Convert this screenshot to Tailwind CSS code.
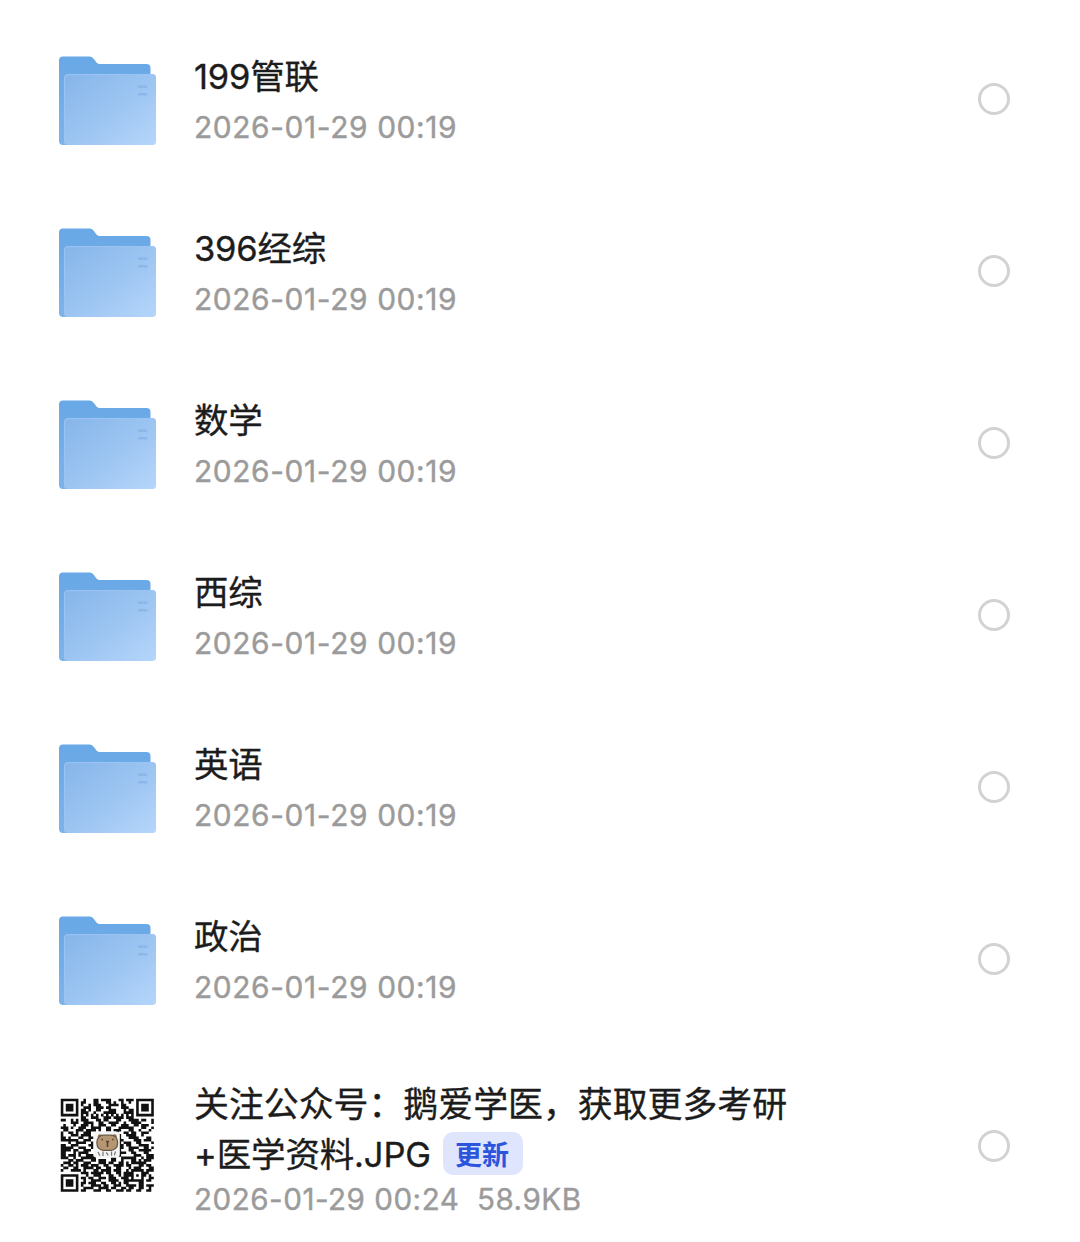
<!DOCTYPE html>
<html lang="zh-CN">

<head>
    <meta charset="UTF-8">
    <meta name="viewport" content="width=device-width, initial-scale=1.0">
    <title>文件列表</title>
    <script src="https://cdn.jsdelivr.net/npm/@tailwindcss/browser@4"></script>
</head>

<body class="bg-white overflow-hidden font-['Inter','Noto_Sans_CJK_SC',sans-serif]">
    <svg class="absolute w-0 h-0">
        <defs>
            <linearGradient id="front" x1="0" y1="0" x2="1" y2="1">
                <stop offset="0" stop-color="#86b5ea" />
                <stop offset="0.5" stop-color="#9bc4f1" />
                <stop offset="1" stop-color="#b6d6fb" />
            </linearGradient>
            <linearGradient id="back" x1="0" y1="0" x2="0" y2="1">
                <stop offset="0" stop-color="#68a8e6" />
                <stop offset="1" stop-color="#7db3ea" />
            </linearGradient>
        </defs>
    </svg>

    <main class="pt-3.5">
        <div id="folders"></div>

        <div class="flex items-center h-[200px] pl-[59px] pr-[70px]">
            <svg id="qr" class="w-[97px] h-[97px] shrink-0 -mt-px" viewBox="-0.7 -0.7 38.6 38.6"></svg>
            <div class="ml-[38px] flex-1 pt-1">
                <p class="text-[34.9px] leading-[52px] text-[#1c1c1c] whitespace-nowrap [-webkit-text-stroke:0.35px_#1c1c1c]">关注公众号：鹅爱学医，获取更多考研</p>
                <div class="flex items-center h-[50px]">
                    <p class="text-[34.5px] leading-[50px] tracking-[-0.15px] text-[#1c1c1c] whitespace-nowrap [-webkit-text-stroke:0.35px_#1c1c1c]">+医学资料.JPG</p>
                    <span class="ml-3 mb-1 w-20 h-[43px] pr-0.5 rounded-[10px] bg-[#dfe5fc] text-[#2d55dc] text-[27px] leading-[47px] font-bold text-center">更新</span>
                </div>
                <p class="text-[29.6px] leading-[38px] tracking-[0.5px] text-[#9b9b9b] whitespace-pre [-webkit-text-stroke:0.4px_#9b9b9b]">2026-01-29 00:24  58.9KB</p>
            </div>
            <span class="size-8 rounded-full border-3 border-[#d2d2d2]"></span>
        </div>
    </main>

    <script>
        const folders = ['199管联', '396经综', '数学', '西综', '英语', '政治'];

        const folderTemplate = (name, date) => `
        <div class="flex items-center h-[172px] pl-[59px] pr-[70px]">
            <svg class="w-[97px] h-[89px] shrink-0" viewBox="0 0 97 89">
                <path fill="url(#back)" d="M4 0.5H30.5Q33 0.5 34.5 2.5L37.5 6.5Q38.7 8 41 8H87.5Q91.5 8 91.5 12V30L20 89H4Q0 89 0 85V4.5Q0 0.5 4 0.5Z" />
                <rect x="5" y="18" width="92" height="71" rx="3.5" fill="url(#front)" />
                <path d="M5.6 86V22Q5.6 18.6 9 18.6H93Q96.4 18.6 96.4 22" fill="none" stroke="#9cc5f3" />
                <path d="M79.5 29.5H89L88 32H78.5ZM79.5 37H89L88 39.5H78.5Z" fill="#84b3e8" opacity="0.75" />
            </svg>
            <div class="ml-[38px] flex-1 pt-1">
                <p class="text-[34.5px] leading-[50px] tracking-[-0.2px] text-[#1c1c1c] [-webkit-text-stroke:0.35px_#1c1c1c]">${name}</p>
                <p class="text-[29.9px] leading-[50px] tracking-[0.6px] text-[#9b9b9b] [-webkit-text-stroke:0.4px_#9b9b9b]">${date}</p>
            </div>
            <span class="size-8 mb-0.5 rounded-full border-3 border-[#d2d2d2]"></span>
        </div>`

        document.getElementById('folders').innerHTML = folders.map(name => folderTemplate(name, '2026-01-29 00:19')).join('');

        // 37 x 37 modules
        const modules = [
            '#######..#...##.####...##.###.#######',
            '#.....#.##...##...##.#..#..#..#.....#',
            '#.###.#.#..#.###...####.##....#.###.#',
            '#.###.#..###..###.##....###...#.###.#',
            '#.###.#.##.#..##...###...#.##.#.###.#',
            '#.....#.###..#...#####...####.#.....#',
            '#######.#.#.#.#.#.#.#.#.#.#.#.#######',
            '........##..###..###.####.###........',
            '##..#.#.###...##.##...##...####.##..#',
            '....###..####..##..####..#..####....#',
            '.#...#..###.#..###..##..###..##.###..',
            '###.#..###..####..##...######...##..#',
            '.##...###.####.#..##.###...##..#...#.',
            '#..##.#..###..........#..##.##..###..',
            '#...###.####.........###..####..#....',
            '##.#...##..##.........##...####...##.',
            '#######..###..........###....###.###.',
            '...#..####..#.........##.###..##....#',
            '##..###....##.........###.##...####..',
            '#####..###..#..........##..####..##.#',
            '####.##..###..........##...##..#####.',
            '##...#.####...........####..##...##..',
            '##.###.#..###........###.....###..###',
            '###..#..######......##..######..#.###',
            '...##.###...##.###..##..#...##.#.###.',
            '.###.##..###...###.##..##.#.######...',
            '#..##.#.###.###..##..####.##...##.##.',
            '.##..##..####.##..##..##...#.###...##',
            '#...####.#...##.####.###..#.#####.###',
            '........###.#####.##..##.####...###..',
            '#######...#..###...##..#.####.#.##.#.',
            '#.....#.##.##..###.###..###.#...#..##',
            '#.###.#..#..####...####..########.##.',
            '#.###.#.##.###..##..##.#.##....##....',
            '#.###.#.#...####.##..###..####.##.###',
            '#.....#..####..####.##..##.##..##..#.',
            '#######.##...###..##..###.##..##..##.',
        ];

        const dots = modules.map((row, y) => [...row].map((cell, x) => cell === '#' ? `M${x} ${y}h1.03v1.03h-1.03z` : '').join('')).join('');

        // code with the bear avatar in the middle
        document.getElementById('qr').innerHTML = `
            <path d="${dots}" fill="#111" />
            <rect x="13" y="13" width="10.5" height="10.5" rx="1.5" fill="#f4f4f4" />
            <circle cx="15.6" cy="15" r="0.9" fill="#8b745d" />
            <circle cx="21.4" cy="15" r="0.9" fill="#8b745d" />
            <rect x="14.4" y="14.5" width="8.2" height="6" rx="2.6" fill="#b59673" stroke="#6b5644" stroke-width="0.5" />
            <path d="M18 17h1.2M18.6 17v2.2M16.2 16.2h.6M20.4 16.2h.6" fill="none" stroke="#57402f" stroke-width="0.6" />
            <path d="M14.8 21.2l.8 1.5M16.8 21v1.8M18.1 21.3l.8 1.2M20.2 21v1.7M21.8 21l-.5 1.5" stroke="#77777d" stroke-width="0.5" />`;
    </script>
</body>

</html>
